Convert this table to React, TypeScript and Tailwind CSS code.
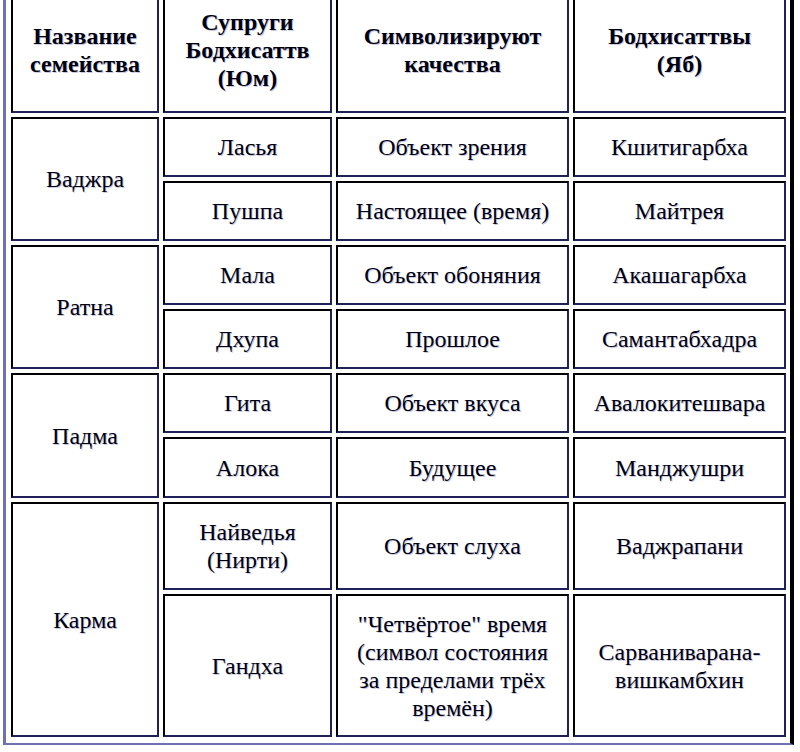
const families = [
  { name: 'Ваджра', rows: [['Ласья', 'Объект зрения', 'Кшитигарбха'], ['Пушпа', 'Настоящее (время)', 'Майтрея']] },
  { name: 'Ратна', rows: [['Мала', 'Объект обоняния', 'Акашагарбха'], ['Дхупа', 'Прошлое', 'Самантабхадра']] },
  { name: 'Падма', rows: [['Гита', 'Объект вкуса', 'Авалокитешвара'], ['Алока', 'Будущее', 'Манджушри']] },
]

const cell =
  'flex items-center justify-center text-center border-t-2 border-l-2 border-t-black border-l-black border-r-2 border-b-2 border-r-[#20205a] border-b-[#20205a] px-2'

const Lines = ({ lines }: { lines: string[] }) => (
  <span>
    {lines.map((l, i) => (
      <span key={i}>
        {i > 0 && <br />}
        {l}
      </span>
    ))}
  </span>
)

export default function App() {
  return (
    <div className="min-h-screen bg-white font-['Liberation_Serif',serif]">
      <div className="ml-[3px] mt-[-20px] inline-block border-l-[3px] border-b-2 border-t-[3px] border-r-4 border-l-[#7070b4] border-b-[#7070b4] border-t-[#7070b4] border-r-black pl-[5px] pr-[4px] pt-[4px] pb-[6px] text-[24px] leading-[28px] text-[#00000c] [text-shadow:1px_1px_0_rgba(70,70,170,0.3)]">
        <div className="grid grid-cols-[148px_169px_233px_213px] grid-rows-[126px_60px_60px_60px_60px_60px_61px_88px_143px] gap-[4px]">
          <div className={cell + ' font-bold'}>
            <Lines lines={['Название', 'семейства']} />
          </div>
          <div className={cell + ' font-bold'}>
            <Lines lines={['Супруги', 'Бодхисаттв', '(Юм)']} />
          </div>
          <div className={cell + ' font-bold'}>
            <Lines lines={['Символизируют', 'качества']} />
          </div>
          <div className={cell + ' font-bold'}>
            <Lines lines={['Бодхисаттвы', '(Яб)']} />
          </div>

          {families.map(f => [
            <div key={f.name} className={cell + ' row-span-2'}>
              {f.name}
            </div>,
            ...f.rows.flatMap((r, ri) =>
              r.map((t, ci) => (
                <div key={f.name + ri + ci} className={cell}>
                  {t}
                </div>
              ))
            ),
          ])}

          <div className={cell + ' row-span-2'}>Карма</div>
          <div className={cell}>
            <Lines lines={['Найведья', '(Нирти)']} />
          </div>
          <div className={cell}>Объект слуха</div>
          <div className={cell}>Ваджрапани</div>
          <div className={cell}>Гандха</div>
          <div className={cell}>
            <Lines lines={['"Четвёртое" время', '(символ состояния', 'за пределами трёх', 'времён)']} />
          </div>
          <div className={cell}>
            <Lines lines={['Сарваниварана-', 'вишкамбхин']} />
          </div>
        </div>
      </div>
    </div>
  )
}
